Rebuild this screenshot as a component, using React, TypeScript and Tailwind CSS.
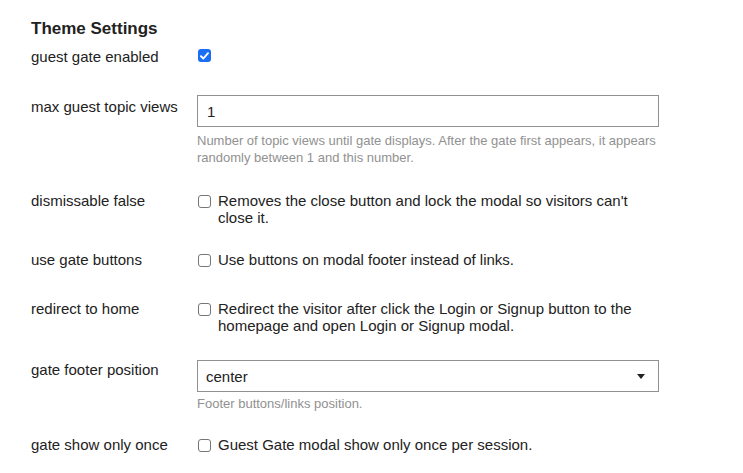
import React from 'react';

function Box({ checked }: { checked?: boolean }) {
    if (checked) {
        return (
            <span className="mt-[1px] ml-[1px] flex h-[13px] w-[13px] shrink-0 items-center justify-center rounded-[3px] bg-[#1a6df5]">
                <svg width="9" height="8" viewBox="0 0 9 8" fill="none">
                    <path d="M1 4.2L3.4 6.5L8 1.2" stroke="white" strokeWidth="1.9" strokeLinecap="round" strokeLinejoin="round" />
                </svg>
            </span>
        );
    }
    return <span className="mt-[3px] ml-[1px] h-[13px] w-[13px] shrink-0 rounded-[3px] border border-[#767676] bg-white" />;
}

function Row({ label, className, labelClass, children }: { label: string; className?: string; labelClass?: string; children: React.ReactNode }) {
    return (
        <div className={`flex items-start ${className ?? ''}`}>
            <div className={`w-[166px] shrink-0 text-[15px] leading-[17px] text-[#222] ${labelClass ?? ''}`}>{label}</div>
            <div className="w-[462px]">{children}</div>
        </div>
    );
}

function CheckText({ text }: { text: string }) {
    return (
        <div className="flex items-start gap-[7px]">
            <Box />
            <span className="text-[15px] leading-[17px] text-[#222]">{text}</span>
        </div>
    );
}

export default function App() {
    return (
        <div className="min-h-[473px] bg-white px-[31px] pt-[19px]" style={{ fontFamily: '"Liberation Sans", Arial, sans-serif' }}>
            <h3 className="text-[17px] font-bold leading-[20px] text-[#222]">Theme Settings</h3>

            <Row label="guest gate enabled" className="mt-[9px]">
                <Box checked />
            </Row>

            <Row label="max guest topic views" className="mt-[30px]" labelClass="pt-[3px]">
                <input
                    readOnly
                    value="1"
                    className="block h-[32px] w-full border border-[#919191] bg-white px-[9px] text-[15px] text-[#222] outline-none"
                />
                <p className="mt-[5px] text-[13px] leading-[17px] text-[#919191]">
                    Number of topic views until gate displays. After the gate first appears, it appears randomly between 1 and this number.
                </p>
            </Row>

            <Row label="dismissable false" className="mt-[26px]">
                <CheckText text="Removes the close button and lock the modal so visitors can't close it." />
            </Row>

            <Row label="use gate buttons" className="mt-[25px]">
                <CheckText text="Use buttons on modal footer instead of links." />
            </Row>

            <Row label="redirect to home" className="mt-[32px]">
                <CheckText text="Redirect the visitor after click the Login or Signup button to the homepage and open Login or Signup modal." />
            </Row>

            <Row label="gate footer position" className="mt-[26px]" labelClass="pt-[1px]">
                <div className="flex h-[32px] w-full items-center justify-between border border-[#919191] bg-white pl-[8px] pr-[13px]">
                    <span className="pt-[2px] text-[15px] text-[#222]">center</span>
                    <svg width="8" height="5" viewBox="0 0 8 5">
                        <path d="M0 0H8L4 5Z" fill="#222" />
                    </svg>
                </div>
                <p className="mt-[3px] text-[13px] leading-[17px] text-[#919191]">Footer buttons/links position.</p>
            </Row>

            <Row label="gate show only once" className="mt-[24px]">
                <CheckText text="Guest Gate modal show only once per session." />
            </Row>
        </div>
    );
}
